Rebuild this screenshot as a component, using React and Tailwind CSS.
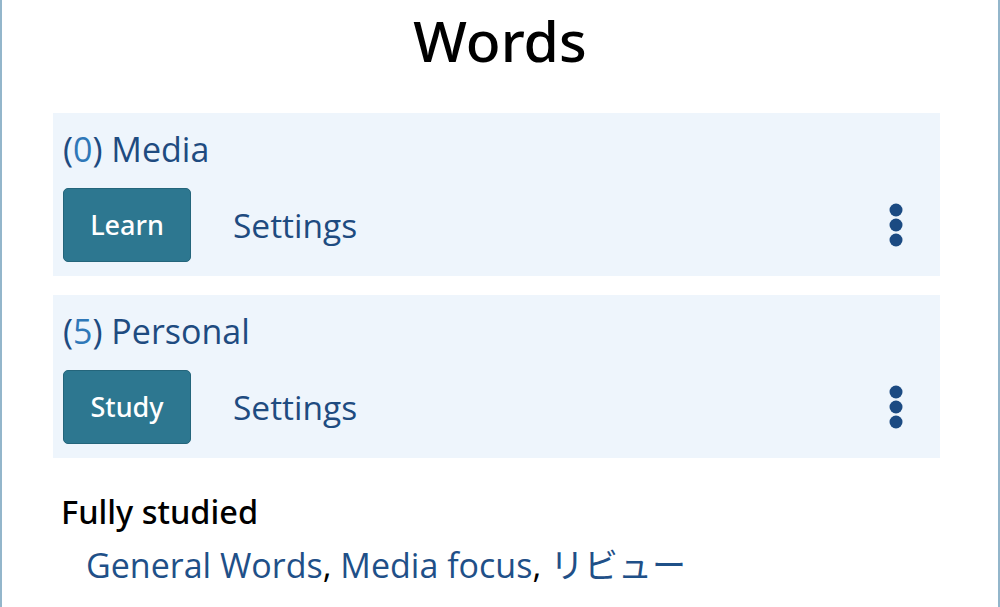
import React from 'react';

const decks = [
  { count: 0, name: 'Media', action: 'Learn' },
  { count: 5, name: 'Personal', action: 'Study' },
];

const finished = ['General Words', 'Media focus', 'リビュー'];

function Dots() {
  return (
    <svg width="14" height="44" viewBox="0 0 14 44" className="text-[#1b4a82]">
      <circle cx="7" cy="7" r="6.5" fill="currentColor" />
      <circle cx="7" cy="22" r="6.5" fill="currentColor" />
      <circle cx="7" cy="37" r="6.5" fill="currentColor" />
    </svg>
  );
}

function DeckCard({ deck }) {
  return (
    <div className="bg-[#eef5fc] pl-[10px] pr-[37px] pt-[14px] pb-[14px]">
      <div className="text-[34px] leading-[44px] text-[#1e4b80]">
        (<span className="text-[#2f78b8]">{deck.count}</span>) {deck.name}
      </div>
      <div className="flex items-center mt-[17px]">
        <button className="w-[128px] h-[74px] rounded-[5px] bg-[#2d7790] border border-[#24657b] text-white text-[27px] font-['Noto_Sans',sans-serif] font-medium">
          {deck.action}
        </button>
        <a className="ml-[42px] text-[33.5px] text-[#1e4b80]">Settings</a>
        <div className="ml-auto">
          <Dots />
        </div>
      </div>
    </div>
  );
}

export default function App() {
  return (
    <div
      className="w-[1000px] h-[607px] overflow-hidden bg-white border-l-2 border-r-2 border-[#93b6cb]"
      style={{ fontFamily: '"Open Sans", "Noto Sans", "Noto Sans CJK JP", sans-serif' }}
    >
      <h1 className="text-center text-[57px] leading-[76px] font-['Noto_Sans',sans-serif] font-medium text-black pt-[2px]">Words</h1>
      <div className="ml-[51px] w-[887px] mt-[35px] flex flex-col gap-[19px]">
        {decks.map((d) => (
          <DeckCard key={d.name} deck={d} />
        ))}
      </div>
      <div className="ml-[59px] mt-[34px]">
        <div className="text-[32.5px] leading-[40px] font-['Noto_Sans',sans-serif] font-medium text-black">Fully studied</div>
        <div className="ml-[25px] mt-[13px] text-[34px] leading-[40px] text-black">
          {finished.map((f, i) => (
            <span key={f}>
              <a className="text-[#1f5088]">{f}</a>
              {i < finished.length - 1 && ', '}
            </span>
          ))}
        </div>
      </div>
    </div>
  );
}
